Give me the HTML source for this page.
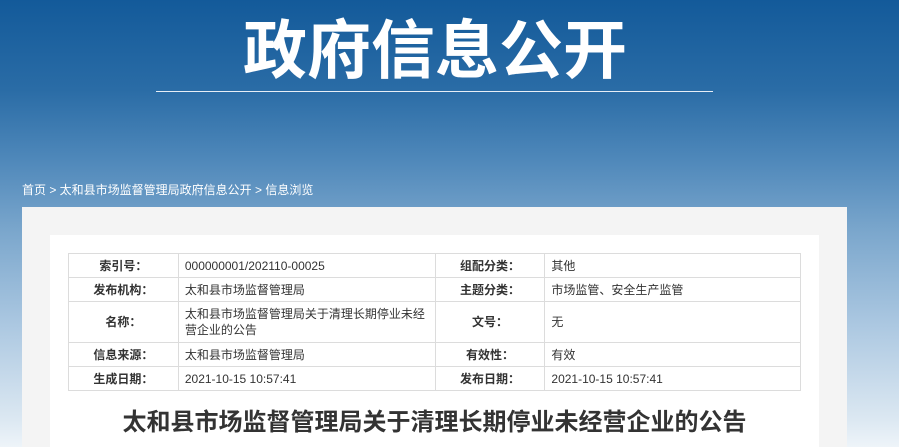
<!DOCTYPE html>
<html style="width:899px;height:447px;overflow:hidden;background:#dce8f2"><head><meta charset="utf-8"><style>
*{margin:0;padding:0;box-sizing:border-box}
body{width:899px;height:447px;overflow:hidden;position:relative;font-family:"Liberation Sans","Microsoft YaHei","Noto Sans CJK SC",sans-serif;
background:linear-gradient(180deg,#135a9a 0px,#2a6ca6 90px,#4f88ba 160px,#7aa6cc 230px,#a9c6e0 320px,#dce8f2 420px,#eef4f9 447px);}
.title{position:absolute;left:0;width:870px;top:10px;text-align:center;color:#fff;font-size:64px;font-weight:bold;line-height:72px;font-family:"Noto Sans CJK SC",sans-serif;}
.line{position:absolute;left:156px;top:91px;width:557px;height:1px;background:#e6eef6}
.bc{position:absolute;left:22px;top:182px;font-size:12px;color:#fff;line-height:16px}
.panel{position:absolute;left:22px;top:207px;width:825px;height:240px;background:#f4f4f4}
.inner{position:absolute;left:50px;top:235px;width:769px;height:212px;background:#fff}
table{position:absolute;left:68px;top:253px;width:733px;border-collapse:collapse;font-size:12px;color:#333}
td{border:1px solid #dcdcdc;padding:0 6px;height:24px;line-height:16px}
td.l{text-align:center;font-weight:bold;color:#333}
.h{position:absolute;left:0;width:869px;top:406px;text-align:center;font-size:24px;font-weight:bold;color:#333;line-height:34px}
</style></head><body>
<div class="title">政府信息公开</div>
<div class="line"></div>
<div class="bc">首页 &gt; 太和县市场监督管理局政府信息公开 &gt; 信息浏览</div>
<div class="panel"></div>
<div class="inner"></div>
<table>
<colgroup><col style="width:110px"><col style="width:257px"><col style="width:110px"><col style="width:256px"></colgroup>
<tr><td class="l">索引号：</td><td>000000001/202110-00025</td><td class="l">组配分类：</td><td>其他</td></tr>
<tr><td class="l">发布机构：</td><td>太和县市场监督管理局</td><td class="l">主题分类：</td><td>市场监管、安全生产监管</td></tr>
<tr><td class="l" style="height:41px">名称：</td><td>太和县市场监督管理局关于清理长期停业未经营企业的公告</td><td class="l">文号：</td><td>无</td></tr>
<tr><td class="l">信息来源：</td><td>太和县市场监督管理局</td><td class="l">有效性：</td><td>有效</td></tr>
<tr><td class="l">生成日期：</td><td>2021-10-15 10:57:41</td><td class="l">发布日期：</td><td>2021-10-15 10:57:41</td></tr>
</table>
<div class="h">太和县市场监督管理局关于清理长期停业未经营企业的公告</div>
</body></html>
